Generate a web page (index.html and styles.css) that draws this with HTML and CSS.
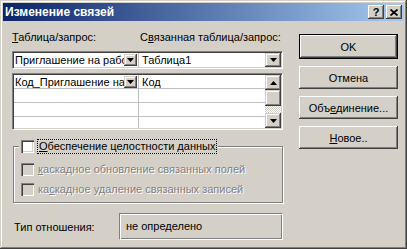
FILE: index.html
```html
<!DOCTYPE html>
<html lang="ru">
<head>
    <meta charset="UTF-8">
    <meta name="viewport" content="width=device-width, initial-scale=1.0">
    <title>Изменение связей</title>
    <link rel="stylesheet" href="styles.css">
</head>
<body>
    <div class="window">
        <div class="titlebar">
            <span class="title">Изменение связей</span>
            <div class="title-buttons">
                <button class="tbtn help">?</button>
                <button class="tbtn">
                    <svg width="8" height="7" viewBox="0 0 8 7"><path d="M0.5 0.5 L7.5 6.5 M7.5 0.5 L0.5 6.5" stroke="#000" stroke-width="1.7"/></svg>
                </button>
            </div>
        </div>

        <div class="body">
            <div class="main">
                <div class="labels">
                    <span class="lbl lbl-first"><u>Т</u>аблица/запрос:</span>
                    <span class="lbl">С<u>в</u>язанная таблица/запрос:</span>
                </div>

                <div class="combos">
                    <div class="cell c1">
                        <span class="ctext">Приглашение на работу</span>
                        <span class="drop small"><svg width="7" height="4" viewBox="0 0 7 4"><polygon points="0,0 7,0 3.5,4" fill="#000"/></svg></span>
                    </div>
                    <div class="cell c2">
                        <span class="ctext">Таблица1</span>
                        <span class="drop"><svg width="7" height="4" viewBox="0 0 7 4"><polygon points="0,0 7,0 3.5,4" fill="#000"/></svg></span>
                    </div>
                </div>

                <div class="grid">
                    <div class="rows">
                        <div class="row">
                            <div class="cell c1">
                                <span class="ctext">Код_Приглашение на работу</span>
                                <span class="drop small"><svg width="7" height="4" viewBox="0 0 7 4"><polygon points="0,0 7,0 3.5,4" fill="#000"/></svg></span>
                            </div>
                            <div class="cell c2"><span class="ctext">Код</span></div>
                        </div>
                        <div class="row"><div class="cell c1"></div><div class="cell c2"></div></div>
                        <div class="row"><div class="cell c1"></div><div class="cell c2"></div></div>
                        <div class="row"><div class="cell c1"></div><div class="cell c2"></div></div>
                    </div>
                    <div class="scrollbar">
                        <span class="sbtn"><svg width="7" height="4" viewBox="0 0 7 4"><polygon points="0,4 7,4 3.5,0" fill="#000"/></svg></span>
                        <span class="thumb"></span>
                        <span class="track"></span>
                        <span class="sbtn"><svg width="7" height="4" viewBox="0 0 7 4"><polygon points="0,0 7,0 3.5,4" fill="#000"/></svg></span>
                    </div>
                </div>

                <fieldset class="group">
                    <legend>
                        <span class="check">
                            <span class="box"></span>
                            <span class="focus"><u>О</u>беспечение целостности данных</span>
                        </span>
                    </legend>
                    <div class="check disabled first">
                        <span class="box"></span>
                        <span class="text"><u>к</u>аскадное обновление связанных полей</span>
                    </div>
                    <div class="check disabled">
                        <span class="box"></span>
                        <span class="text">ка<u>с</u>кадное удаление связанных записей</span>
                    </div>
                </fieldset>

                <div class="reltype">
                    <span class="reltype-label">Тип отношения:</span>
                    <div class="static">не определено</div>
                </div>
            </div>

            <div class="buttons">
                <button class="btn default">OK</button>
                <button class="btn">Отмена</button>
                <button class="btn">Объ<u>е</u>динение...</button>
                <button class="btn"><u>Н</u>овое..</button>
            </div>
        </div>
    </div>
</body>
</html>
```

FILE: styles.css
```css
* {
    box-sizing: border-box;
}
body {
    margin: 0;
    font-family: "Liberation Sans", Arial, sans-serif;
    font-size: 11px;
    color: #000;
    background: #d4d0c8;
}
u {
    text-decoration-thickness: 1px;
    text-underline-offset: 1px;
}
.window {
    width: 407px;
    height: 249px;
    padding: 3px;
    background: #d4d0c8;
    box-shadow: inset -1px -1px #404040, inset 1px 1px #d4d0c8, inset -2px -2px #808080, inset 2px 2px #fff;
}
.titlebar {
    height: 18px;
    display: flex;
    align-items: center;
    justify-content: space-between;
    padding: 0 2px 0 2px;
    background: linear-gradient(to right, #0a246a, #a6caf0);
}
.title {
    color: #fff;
    font-weight: bold;
    font-size: 12px;
}
.title-buttons {
    display: flex;
    gap: 2px;
}
.tbtn {
    width: 16px;
    height: 14px;
    padding: 0;
    border: 0;
    background: #d4d0c8;
    display: flex;
    align-items: center;
    justify-content: center;
    box-shadow: inset -1px -1px #404040, inset 1px 1px #fff, inset -2px -2px #808080, inset 2px 2px #d4d0c8;
}
.tbtn.help {
    font-family: "Liberation Sans", Arial, sans-serif;
    font-weight: bold;
    font-size: 11px;
    line-height: 14px;
}
.body {
    display: flex;
    padding: 10px 0 0 9px;
}
.main {
    width: 271px;
}
.labels {
    display: flex;
    height: 13px;
    line-height: 13px;
}
.lbl-first {
    width: 128px;
}

/* combo row and grid share the sunken frame */
.combos,
.grid {
    display: flex;
    background: #fff;
    border: 1px solid;
    border-color: #808080 #fff #fff #808080;
    box-shadow: inset 1px 1px #404040, inset -1px -1px #d4d0c8;
    padding: 1px;
}
.combos {
    margin-top: 7px;
    height: 18px;
}
.cell {
    display: flex;
    align-items: center;
    height: 14px;
    line-height: 14px;
    overflow: hidden;
    white-space: nowrap;
}
.cell.c1 {
    width: 125px;
    border-right: 1px solid #c0c0c0;
}
.cell.c2 {
    flex: 1;
    padding-left: 2px;
}
.ctext {
    flex: 1;
    overflow: hidden;
    padding-left: 1px;
}
.drop {
    display: flex;
    align-items: center;
    justify-content: center;
    width: 16px;
    height: 14px;
    flex: none;
    background: #d4d0c8;
    box-shadow: inset -1px -1px #404040, inset 1px 1px #d4d0c8, inset -2px -2px #808080, inset 2px 2px #fff;
}
.drop.small {
    width: 13px;
    height: 12px;
    margin-right: 1px;
}
.grid {
    margin-top: 4px;
    height: 57px;
}
.rows {
    flex: 1;
    overflow: hidden;
}
.row {
    display: flex;
    border-bottom: 1px solid #c0c0c0;
}
.row .cell {
    height: 13px;
}
.scrollbar {
    width: 16px;
    display: flex;
    flex-direction: column;
}
.sbtn,
.thumb {
    display: flex;
    align-items: center;
    justify-content: center;
    height: 15px;
    background: #d4d0c8;
    box-shadow: inset -1px -1px #404040, inset 1px 1px #d4d0c8, inset -2px -2px #808080, inset 2px 2px #fff;
}
.thumb {
    height: 16px;
}
.track {
    flex: 1;
    background: repeating-conic-gradient(#d4d0c8 0 25%, #fff 0 50%) 0 0 / 2px 2px;
}

/* referential integrity group */
.group {
    margin: 9px 0 0 1px;
    padding: 0 8px 6px 5px;
    width: 270px;
    height: 64px;
    min-width: 0;
    border: 1px solid #808080;
    box-shadow: inset 1px 1px #fff, 1px 1px #fff;
}
.group legend {
    padding: 0 2px;
    background: #d4d0c8;
}
.check {
    display: flex;
    align-items: center;
    gap: 4px;
    height: 14px;
    line-height: 13px;
}
.group .check.disabled {
    margin: 6px 0 0 2px;
}
.group .check.first {
    margin-top: 9px;
}
.box {
    width: 13px;
    height: 13px;
    flex: none;
    background: #fff;
    box-shadow: inset 1px 1px #808080, inset 2px 2px #404040, inset -1px -1px #fff, inset -2px -2px #d4d0c8;
}
.disabled .box {
    background: #d4d0c8;
}
.disabled .text {
    color: #808080;
    text-shadow: 1px 1px #fff;
}
.focus {
    outline: 1px dotted #000;
    padding: 0 1px;
}

.reltype {
    display: flex;
    align-items: center;
    margin-top: 10px;
    padding-left: 2px;
}
.reltype-label {
    width: 105px;
}
.static {
    width: 164px;
    height: 27px;
    line-height: 25px;
    padding-left: 6px;
    border: 1px solid;
    border-color: #808080 #fff #fff #808080;
    box-shadow: inset 1px 1px #fff, inset -1px -1px #808080;
}

.buttons {
    margin-left: 16px;
    padding-top: 3px;
    display: flex;
    flex-direction: column;
    gap: 7px;
}
.btn {
    width: 99px;
    height: 23px;
    padding: 0;
    border: 0;
    font: inherit;
    color: #000;
    background: #d4d0c8;
    box-shadow: inset -1px -1px #404040, inset 1px 1px #fff, inset -2px -2px #808080, inset 2px 2px #d4d0c8;
}
.btn.default {
    height: 25px;
    box-shadow: inset 0 0 0 1px #000, inset -2px -2px #404040, inset 2px 2px #fff, inset -3px -3px #808080;
}
```
